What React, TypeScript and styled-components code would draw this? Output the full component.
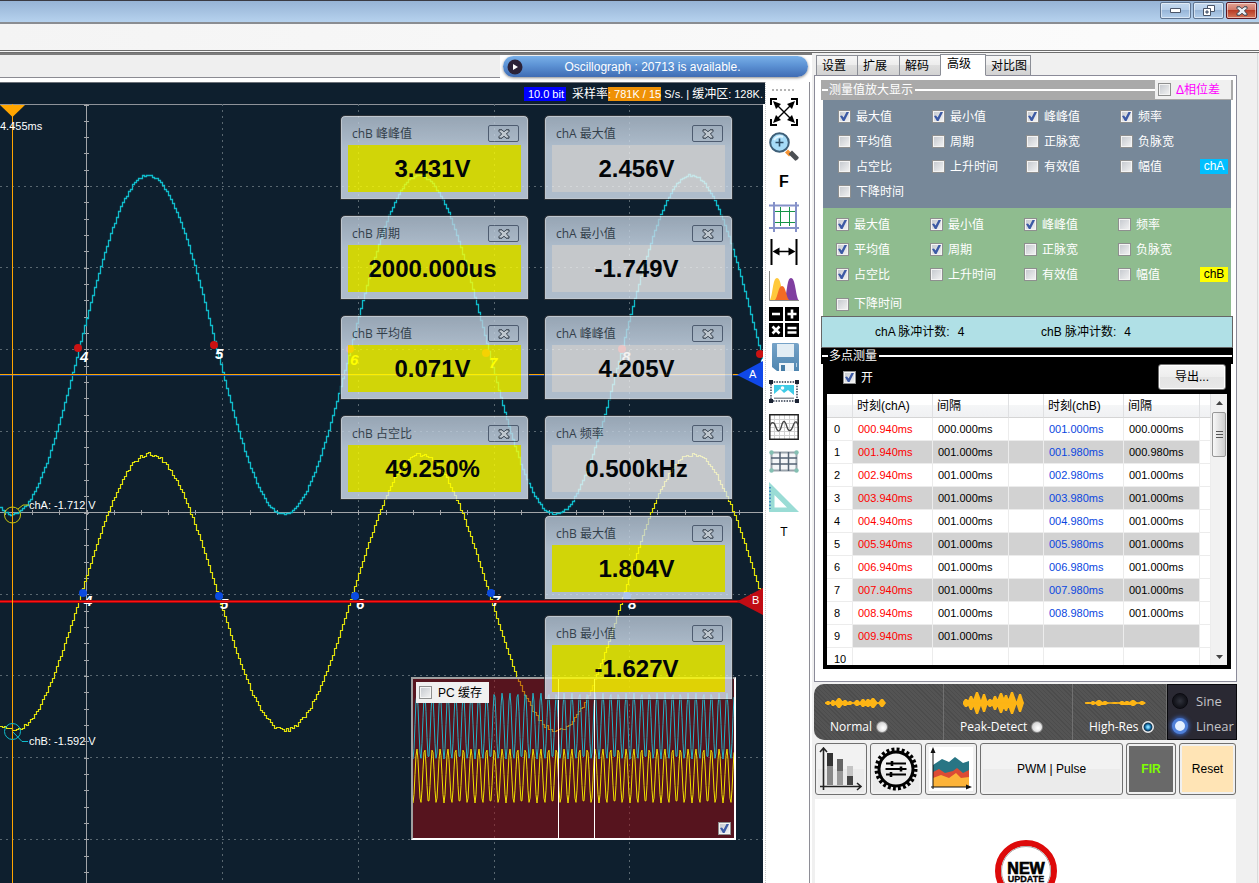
import React from "react";
import styled, { createGlobalStyle, css } from "styled-components";

const SANS = `"Liberation Sans", "Noto Sans CJK SC", sans-serif`;
const HUMANIST = `"Open Sans", "Noto Sans CJK SC", sans-serif`;

const GlobalStyle = createGlobalStyle`
  * { box-sizing: border-box; }
  body { margin: 0; background: #f0f0f0; font: 12px/16px ${SANS}; color: #000; }
  button { font: inherit; color: inherit; padding: 0; cursor: pointer; }
  svg { display: block; }
`;

/* ---------- window frame ---------- */

const Page = styled.div`
  display: flex;
  flex-direction: column;
  height: 100vh;
  overflow: hidden;
`;

const TitleBar = styled.header`
  display: flex;
  justify-content: flex-end;
  align-items: flex-start;
  gap: 2px;
  height: 24px;
  flex: none;
  padding: 1px 2px 0;
  border-top: 1px solid #3a3a42;
  border-bottom: 2px solid #8a8d92;
  background: linear-gradient(#96b3d5, #b6d2ee);
`;

const WindowButton = styled.button<{ $danger?: boolean }>`
  display: grid;
  place-items: center;
  width: 31px;
  height: 17px;
  border: 1px solid ${(p) => (p.$danger ? "#5a1420" : "#5f7490")};
  border-radius: 2px;
  box-shadow: inset 0 0 0 1px rgba(255, 255, 255, 0.5);
  background: ${(p) =>
    p.$danger
      ? "linear-gradient(#e3a495, #cf7666 48%, #b83c26 50%, #d47558)"
      : "linear-gradient(#c4d9ef, #b5cde8 48%, #98b6d8 50%, #b4cfec)"};
`;

const MenuBand = styled.div`
  flex: none;
  height: 29px;
  border-bottom: 3px double #6e6e6e;
  background: linear-gradient(90deg, #f4f4f4, #fcfcfc);
`;

const Main = styled.main`
  display: flex;
  flex: 1;
  min-height: 0;
`;

const Left = styled.section`
  display: flex;
  flex-direction: column;
  flex: 1;
  min-width: 0;
  background: #fff;
  border-top: 2px solid #7c7c7c;
`;

const StatusRow = styled.div`
  display: flex;
  flex: none;
  height: 27px;
`;

const StatusBlank = styled.div`
  flex: 1;
  height: 23px;
  background: #efefef;
  border-bottom: 1px solid #8b8b92;
`;

const StatusPill = styled.div`
  display: flex;
  align-items: center;
  width: 305px;
  height: 21px;
  margin: 1px 4px 0 3px;
  padding: 0 4px;
  border-radius: 11px;
  color: #fff;
  background: linear-gradient(#79b0e8, #5c92d4 45%, #3f6cb4);
  box-shadow: 0 1px 3px #8a8a8a;
`;

const StatusText = styled.span`
  flex: 1;
  padding: 1px 22px 0 0;
  text-align: center;
`;

const Work = styled.div`
  display: flex;
  flex: 1;
  min-height: 0;
`;

const Scope = styled.div`
  display: flex;
  flex-direction: column;
  flex: 1;
  min-width: 0;
`;

const Readout = styled.div`
  display: flex;
  align-items: center;
  justify-content: flex-end;
  flex: none;
  height: 22px;
  padding-right: 2px;
  border-top: 1px solid #6c7178;
  background: #0e1f2e;
  color: #fff;
  font-size: 11px;
  line-height: 14px;
  white-space: pre;
`;

const BitTag = styled.span`
  margin-right: 6px;
  padding: 0 2px 0 4px;
  background: #0000ff;
`;

const RateTag = styled.span`
  background: #ef9106;
`;

const RateUnit = styled.span`
  margin-right: 3px;
`;

const Cjk = styled.span`
  font-size: 12px;
`;

const Canvas = styled.div`
  position: relative;
  flex: 1;
  min-height: 0;
  margin-right: 2px;
  overflow: hidden;
  background: #0e1f2e;
`;

const Trace = styled.svg`
  width: 100%;
  height: 100%;
  font-family: ${SANS};
  font-size: 11px;
`;

/* ---------- floating value windows ---------- */

const Floating = styled.section<{ $x: number; $y: number }>`
  position: absolute;
  left: ${(p) => p.$x}px;
  top: ${(p) => p.$y}px;
  width: 189px;
  height: 85px;
  padding: 0 7px 7px 7px;
  border: 1px solid #33363a;
  border-radius: 5px 5px 0 0;
  box-shadow: inset 0 0 0 1px #e8eef5;
  background: linear-gradient(#b6c4d3, #d3e1f0 32px);
  opacity: 0.81;
`;

const FloatingHead = styled.div`
  display: flex;
  align-items: center;
  justify-content: space-between;
  height: 29px;
  padding: 6px 2px 0 4px;
  font-family: ${HUMANIST};
  color: #3c4852;
`;

const CloseButton = styled.button`
  display: grid;
  place-items: center;
  width: 31px;
  height: 17px;
  border: 1px solid #5d6b80;
  border-radius: 2px;
  background: transparent;
`;

const FloatingValue = styled.div<{ $yellow?: boolean }>`
  height: 47px;
  padding-right: 4px;
  font-size: 24px;
  font-weight: 700;
  line-height: 47px;
  text-align: center;
  background: ${(p) => (p.$yellow ? "#ffff00" : "#f0f0f0")};
`;

const Preview = styled.section`
  position: absolute;
  left: 411px;
  top: 573px;
  width: 325px;
  height: 163px;
  border: 2px solid #fff;
  border-top-color: #a0a0a0;
  border-left-color: #a0a0a0;
  background: rgba(158, 9, 14, 0.5);
`;

const PreviewCheck = styled.label`
  position: absolute;
  left: 3px;
  top: 3px;
  display: flex;
  align-items: center;
  gap: 6px;
  width: 73px;
  height: 21px;
  padding-left: 3px;
  background: #f0f0f0;
`;

const PreviewCorner = styled.div`
  position: absolute;
  right: 3px;
  bottom: 3px;
  display: flex;
`;

/* ---------- tool strip ---------- */

const Tools = styled.nav`
  display: flex;
  flex-direction: column;
  align-items: center;
  flex: none;
  width: 45px;
  margin-right: 2px;
  padding-right: 7px;
  border-left: 1px dotted #c8c8c8;
  border-right: 1px solid #8e8e96;
`;

const Grip = styled.div`
  flex: none;
  width: 24px;
  height: 2px;
  margin: 7px 0 3px;
  background: repeating-linear-gradient(90deg, #b4b4b4 0 2px, transparent 2px 4px);
`;

const ToolButton = styled.button<{ $size?: number; $bold?: boolean }>`
  display: grid;
  place-items: center;
  flex: none;
  width: 30px;
  height: 35px;
  border: 0;
  background: none;
  font-size: ${(p) => p.$size ?? 12}px;
  font-weight: ${(p) => (p.$bold ? 700 : 400)};
`;

/* ---------- right side ---------- */

const Side = styled.aside`
  display: flex;
  flex-direction: column;
  flex: none;
  width: 446px;
  margin-right: 1px;
  padding: 1px 20px 0 2px;
  border-right: 1px solid #dadada;
`;

const Tabs = styled.div`
  display: flex;
  align-items: flex-end;
  flex: none;
  height: 22px;
  padding-left: 3px;
  margin-bottom: -1px;
`;

const Tab = styled.button<{ $active?: boolean; $width: number }>`
  width: ${(p) => p.$width}px;
  height: 21px;
  padding-left: 5px;
  border: 1px solid #8b8e96;
  margin-left: -1px;
  text-align: left;
  background: linear-gradient(#f6f6f6, #ececec 50%, #dedede 50%, #d2d2d2);
  ${(p) =>
    p.$active &&
    css`
      z-index: 1;
      height: 22px;
      padding: 0 0 3px 6px;
      border-bottom-color: #fff;
      background: #fff;
    `}
`;

const TabPanel = styled.div`
  flex: none;
  padding: 4px 3px 12px 6px;
  border: 1px solid #8b8b99;
  background: #fff;
`;

const GroupHead = styled.div<{ $tone: string; $height: number }>`
  display: flex;
  align-items: center;
  height: ${(p) => p.$height}px;
  padding-left: 1px;
  color: #fff;
  background: ${(p) => p.$tone};
`;

const Rule = styled.span<{ $grow?: boolean }>`
  height: 2px;
  background: #fff;
  margin-right: 1px;
  ${(p) => (p.$grow ? "flex: 1; margin-left: 2px;" : "width: 6px;")}
`;

const PhaseCheck = styled.label`
  display: flex;
  align-self: flex-start;
  align-items: center;
  gap: 5px;
  width: 76px;
  height: 19px;
  padding-left: 3px;
  margin-right: 2px;
  margin-left: -1px;
  color: #ff00ff;
  background: #f0f0f0;
`;

const CheckLabel = styled.label`
  display: flex;
  align-items: center;
  gap: 5px;
  line-height: 16px;
  white-space: nowrap;
`;

const ChannelGrid = styled.div<{ $tone: string; $indent: number; $drop?: boolean }>`
  display: grid;
  grid-template-columns: 94px 94px 94px ${(p) => 95 - p.$indent}px 28px;
  grid-template-rows: 25px 25px 25px 1fr;
  align-items: center;
  height: 108px;
  margin: 0 2px;
  padding: 4px 0 4px ${(p) => p.$indent}px;
  color: #fff;
  background: ${(p) => p.$tone};
  ${CheckLabel}:nth-of-type(4n + 1) {
    grid-column: 1;
  }
  ${CheckLabel}:last-of-type {
    align-self: ${(p) => (p.$drop ? "end" : "center")};
  }
`;

const Check = styled.input.attrs({ type: "checkbox" })`
  appearance: none;
  flex: none;
  display: block;
  width: 13px;
  height: 13px;
  margin: 0;
  border: 1px solid #8e8f8f;
  background: linear-gradient(135deg, #c3c7cd, #f4f4f4);
  box-shadow: inset 0 0 0 1px #f4f4f4;
  &:checked::after {
    content: "";
    display: block;
    width: 9px;
    height: 9px;
    margin: 1px;
    background: #3c5aa5;
    clip-path: polygon(0 45%, 22% 38%, 40% 62%, 72% 0, 100% 0, 50% 100%, 32% 100%);
  }
`;

const ChannelBadge = styled.span<{ $tone: string; $ink: string }>`
  grid-column: 5;
  grid-row: 3;
  height: 15px;
  line-height: 15px;
  text-align: center;
  color: ${(p) => p.$ink};
  background: ${(p) => p.$tone};
`;

const PulseBar = styled.div`
  display: flex;
  align-items: center;
  height: 32px;
  padding-left: 53px;
  border: 1px solid #666;
  background: #b0e0e6;
`;

const PulseItem = styled.span`
  display: flex;
  gap: 8px;
  width: 166px;
`;

const MultiBody = styled.div`
  margin: 0 2px;
  padding: 0 4px 4px;
  background: #000;
`;

const MultiHead = styled.div`
  display: flex;
  justify-content: space-between;
  height: 30px;
  padding: 0 1px 3px 16px;
  color: #fff;
`;

const ExportButton = styled.button`
  width: 68px;
  height: 26px;
  border: 1px solid #707070;
  border-radius: 3px;
  color: #000;
  background: linear-gradient(#f6f6f6, #ededed 50%, #e4e4e4 50%, #e8e8e8);
  box-shadow: inset 0 0 0 1px #fff;
`;

const TableArea = styled.div`
  display: flex;
  height: 271px;
  overflow: hidden;
  background: #fff;
`;

const Table = styled.table`
  flex: 1;
  width: 384px;
  table-layout: fixed;
  border-collapse: separate;
  border-spacing: 0;
  align-self: flex-start;
  font-size: 11px;
`;

const HeadCell = styled.th`
  height: 24px;
  padding: 0 4px;
  border-right: 1px solid #dfe0e2;
  border-bottom: 1px solid #d5d5d5;
  background: linear-gradient(#fff 50%, #f5f6f7 50%, #f0f1f3);
  font-size: 12px;
  font-weight: 400;
  text-align: left;
  white-space: nowrap;
`;

const Cell = styled.td<{ $shade?: boolean; $ink?: string }>`
  height: 23px;
  padding: 0 5px;
  border-right: 1px solid #ececec;
  border-bottom: 1px solid #ececec;
  color: ${(p) => p.$ink ?? "#000"};
  background: ${(p) => (p.$shade ? "#d2d2d2" : "#fff")};
`;

const NumberCell = styled(Cell)`
  padding: 0 7px;
`;

const ScrollBar = styled.div`
  display: flex;
  flex-direction: column;
  align-items: center;
  width: 16px;
  background: #f1f1f1;
`;

const ScrollArrow = styled.button<{ $down?: boolean }>`
  display: grid;
  place-items: center;
  width: 16px;
  height: 17px;
  margin-top: ${(p) => (p.$down ? "auto" : "0")};
  border: 0;
  background: none;
`;

const ScrollThumb = styled.div`
  display: grid;
  place-items: center;
  width: 14px;
  height: 45px;
  margin-top: 1px;
  border: 1px solid #979797;
  border-radius: 2px;
  background: linear-gradient(90deg, #f8f8f8, #e3e3e3 50%, #cdcdcd);
`;

const ModeBar = styled.div`
  display: flex;
  flex: none;
  height: 56px;
  margin-top: 2px;
  color: #fff;
  font: 12px/18px ${HUMANIST};
`;

const ModeTile = styled.label<{ $width: number }>`
  display: flex;
  flex-direction: column;
  width: ${(p) => p.$width}px;
  padding: 5px 0 0 16px;
  border-right: 1px solid #707070;
  background: repeating-linear-gradient(45deg, #4c4c4c 0 1px, #545454 1px 3px);
  &:first-child {
    border-radius: 10px 0 0 10px;
  }
`;

const ModeWave = styled.svg<{ $shift: number }>`
  margin-left: ${(p) => p.$shift}px;
`;

const ModeName = styled.span`
  display: flex;
  align-items: center;
  gap: 4px;
  margin-top: 1px;
`;

const Radio = styled.input.attrs({ type: "radio" })`
  appearance: none;
  flex: none;
  width: 12px;
  height: 12px;
  margin: 0;
  border: 1px solid #888;
  border-radius: 50%;
  background: radial-gradient(circle at 60% 60%, #fff, #c4c4c4);
  &:checked {
    border-color: #e8e8e8;
    background: radial-gradient(circle, #7fd8ff 0 1px, #0a5f96 3px, #12314a 4px, #fff 5px);
  }
`;

const Interp = styled.div`
  display: flex;
  flex-direction: column;
  flex: 1;
  gap: 7px;
  padding: 7px 0 0 4px;
  border: 1px solid #08080c;
  background: #2a2933;
  color: #c4c4c8;
  font-size: 13px;
`;

const InterpRow = styled.label`
  display: flex;
  align-items: center;
  gap: 8px;
`;

const Lamp = styled.input.attrs({ type: "radio" })`
  appearance: none;
  flex: none;
  width: 16px;
  height: 16px;
  margin: 0;
  border: 1px solid #0a0a10;
  border-radius: 50%;
  background: radial-gradient(#30323c, #14151c 60%);
  &:checked {
    border: 3px solid #4f80d8;
    background: #e4f0ff;
    box-shadow: 0 0 4px 1px #3a68c8;
  }
`;

const Actions = styled.div`
  display: flex;
  flex: none;
  gap: 3px;
  margin: 3px 1px 4px;
`;

const ActionButton = styled.button<{ $width?: number; $tone?: string; $ink?: string }>`
  display: grid;
  place-items: center;
  width: ${(p) => p.$width ?? 52}px;
  height: 52px;
  border: 1px solid #707070;
  border-radius: 3px;
  box-shadow: inset 0 0 0 2px #f0f0f0;
  color: ${(p) => p.$ink ?? "#000"};
  font-weight: ${(p) => (p.$ink ? 700 : 400)};
  background: ${(p) => p.$tone ?? "linear-gradient(#f2f2f2 50%, #ebebeb 50%)"};
`;

const UpdateArea = styled.div`
  display: flex;
  justify-content: center;
  flex: 1;
  min-height: 0;
  margin: 0 1px;
  padding-top: 41px;
  overflow: hidden;
  background: #fff;
`;

/* ---------- trace data ---------- */

const noise = (n: number) => {
  const s = Math.sin(n * 127.1 + 11.7) * 43758.5453;
  return (s - Math.floor(s)) * 2 - 1;
};

function steppedSine(peakX: number, mid: number, amp: number, jitter: number, seed: number) {
  const period = 271.5;
  let d = "";
  for (let x = 0; x < 2400; x += 2) {
    const v = mid - amp * Math.cos((2 * Math.PI * (x - peakX)) / period);
    const extreme = Math.abs(v - mid) / amp;
    const y = Math.round(v + noise(x + seed) * jitter * extreme);
    d += x === 0 ? `M0 ${y}.5` : `H${x}.5V${y}.5`;
  }
  return d;
}

function denseSine(mid: number, amp: number) {
  let d = "";
  for (let i = 0; i < 322; i++) {
    const y = mid + amp * Math.cos((2 * Math.PI * i) / 7.75);
    d += `${i ? "L" : "M"}${i} ${y.toFixed(1)}`;
  }
  return d;
}

const traceA = steppedSine(147, 240.5, 169.5, 1, 3);
const traceB = steppedSine(148.5, 488, 138, 2, 57);
const miniA = denseSine(47, 33);
const miniB = denseSine(97, 27);

const gridX = [222, 358, 494, 629, 765, 901, 1037, 1173, 1309, 1445, 1581];
const gridY = [82, 163, 245, 327, 490, 571, 653, 735, 816, 898, 980];

const marksA = [
  { n: 4, x: 78, y: 244, dx: 2, dy: 14 },
  { n: 5, x: 214, y: 241, dx: 1, dy: 14 },
  { n: 6, x: 350, y: 245, dx: 0, dy: 16 },
  { n: 7, x: 486, y: 249, dx: 3, dy: 15 },
  { n: 8, x: 622, y: 245, dx: 0, dy: 13 },
  { n: 9, x: 760, y: 250, dx: 0, dy: 14 },
];
const marksB = [
  { n: 4, x: 83, y: 489 },
  { n: 5, x: 219, y: 492 },
  { n: 6, x: 355, y: 492 },
  { n: 7, x: 491, y: 489 },
  { n: 8, x: 627, y: 492 },
];

function TracePlot() {
  return (
    <Trace role="img" aria-label="chA chB">
      <path d="M0 .5H2400" stroke="#8e9299" />
      <g stroke="#596770" strokeDasharray="2 4">
        {gridX.map((x) => (
          <path key={x} d={`M${x}.5 0V1200`} />
        ))}
        {gridY.map((y) => (
          <path key={y} d={`M0 ${y}.5H2400`} />
        ))}
      </g>
      <g stroke="#a2a5a9">
        <path d="M86.5 0V1200M0 408.5H2400" />
        {Array.from({ length: 72 }, (_, i) => (
          <path key={i} d={`M84 ${Math.round(0.5 + i * 16.33)}.5h5`} />
        ))}
        {Array.from({ length: 86 }, (_, i) => (
          <path key={i} d={`M${Math.round(5 + i * 27.18)}.5 406v5`} />
        ))}
      </g>
      <g fill="none">
        <path d={traceA} stroke="#10bccb" strokeWidth="1.3" />
        <path d={traceB} stroke="#e2e20a" strokeWidth="1.2" />
      </g>
      <path d="M0 271.5H2400" stroke="#17439c" />
      <path d="M0 270.5H2400" stroke="#ffa500" />
      <g fontSize="15" fontWeight="700" fontStyle="italic" fill="#fff">
        {marksA.map((m) => (
          <React.Fragment key={m.n}>
            <circle cx={m.x} cy={m.y} r="4" fill="#cb1212" />
            <text x={m.x + m.dx} y={m.y + m.dy} fill={m.n === 6 || m.n === 7 ? "#ff0" : "#fff"}>
              {m.n}
            </text>
          </React.Fragment>
        ))}
        {marksB.map((m) => (
          <React.Fragment key={m.n}>
            <circle cx={m.x} cy={m.y} r="4" fill="#0a4be0" />
            <text x={m.x + 1} y={m.y + 13}>
              {m.n}
            </text>
          </React.Fragment>
        ))}
      </g>
      <path d="M0 497.5H745" stroke="#9c0a10" strokeWidth="3" />
      <path d="M0 497.5H745" stroke="#ff1010" />
      <path d="M12.5 0V1200" stroke="#ffa500" />
      <path d="M0 1H25L12.5 13Z" fill="#ffa500" />
      <path d="M737 271L763 257V284Z" fill="#1048e8" />
      <path d="M737 497.5L763 484V511Z" fill="#c00c14" />
      <g fill="none">
        <circle cx="12.5" cy="411" r="8" stroke="#c8c810" />
        <path d="M18 405L23 401H29" stroke="#c8c810" />
        <circle cx="12.5" cy="627.5" r="8" stroke="#10bccb" />
        <path d="M13 628L22 637.5H28" stroke="#10bccb" />
      </g>
      <g fill="#fff">
        <text x="0" y="26">4.455ms</text>
        <text x="29" y="405">chA: -1.712 V</text>
        <text x="29" y="641">chB: -1.592 V</text>
        <text x="749" y="274">A</text>
        <text x="752" y="500">B</text>
      </g>
    </Trace>
  );
}

/* ---------- icons ---------- */

const CloseGlyph = () => (
  <svg width="12" height="10" viewBox="0 0 12 10">
    <path d="M1 .8h3l2 2 2-2h3v1.6L8.400 5 11 7.600v1.600H8l-2-2-2 2H1V7.600L3.600 5 1 2.400z" fill="#e8eef4" stroke="#333c48" />
  </svg>
);

const ExpandIcon = () => (
  <svg width="28" height="28" viewBox="0 0 28 28">
    <g fill="none" stroke="#000" strokeWidth="2">
      <path d="M1 7V1h6M21 1h6v6M27 21v6h-6M7 27H1v-6" />
      <path d="M5 5l18 18M23 5L5 23" strokeWidth="1.400" />
    </g>
    <path d="M3 3l8 3-5 5zM25 3l-8 3 5 5zM3 25l8-3-5-5zM25 25l-8-3 5-5z" />
  </svg>
);

const MagnifierIcon = () => (
  <svg width="30" height="30" viewBox="0 0 30 30">
    <path d="M19 17.500l4 4-3 3-4-4z" fill="#f79433" />
    <path d="M19.500 22l3.500-3.500 6.500 6.500c1 1-2.500 4.500-3.500 3.500z" fill="#4c4f54" />
    <circle cx="10.500" cy="10.500" r="9.300" fill="#a6dcf8" stroke="#3f6079" strokeWidth="2" />
    <path d="M5 8a7 7 0 0 1 9-3" fill="none" stroke="#e0f5ff" strokeWidth="2" />
    <path d="M6.500 10.500h8M10.500 6.500v8" stroke="#2c4c66" strokeWidth="1.600" />
  </svg>
);

const CropGridIcon = () => (
  <svg width="30" height="30" viewBox="0 0 30 30" fill="none">
    <path d="M5 0v30M27 0v30M0 3.500h30M0 26h30" stroke="#8591c9" strokeWidth="2" />
    <path d="M11.500 5v19M20.500 5v19M6 9.500h20M6 20.500h20" stroke="#159447" />
  </svg>
);

const WidthIcon = () => (
  <svg width="28" height="26" viewBox="0 0 28 26">
    <path d="M1.500 0v26M26.500 0v26" stroke="#000" strokeWidth="2" />
    <path d="M5 12.500h18" stroke="#000" strokeWidth="1.500" />
    <path d="M2.500 12.500l7-4v8zM25.500 12.500l-7-4v8z" />
  </svg>
);

const HistogramIcon = () => (
  <svg width="30" height="31" viewBox="0 0 30 31">
    <path d="M15 29C18.500 24 17.500 7 22 7s4.500 17 7.500 22z" fill="#803fa0" />
    <path d="M1 29C4 24 3.500 7 8 7s4.500 17 8 22z" fill="#ffc93c" />
    <path d="M6 29c3-3 3-14 7-14s4 11 7 14z" fill="#f36b25" />
    <path d="M.5 0v29.500H30" fill="none" stroke="#8a8a8a" />
  </svg>
);

const CalcIcon = () => (
  <svg width="30" height="30" viewBox="0 0 30 30">
    <path d="M0 0h14v14H0zM16 0h14v14H16zM0 16h14v14H0zM16 16h14v14H16z" />
    <path d="M3 7h8M18.500 7h9M23 2.500v9M3.500 19.500l7 7M10.500 19.500l-7 7M18.500 21h9M18.500 25.500h9" stroke="#fff" strokeWidth="2.600" />
  </svg>
);

const SaveIcon = () => (
  <svg width="30" height="28" viewBox="0 0 30 28">
    <defs>
      <linearGradient id="disk" x1="0" y1="0" x2="0" y2="1">
        <stop offset="0" stopColor="#76a3c8" />
        <stop offset="1" stopColor="#4f86b0" />
      </linearGradient>
    </defs>
    <path d="M3 1q0-1 1-1h24q2 0 2 2v26H8l-5-4z" fill="url(#disk)" />
    <path d="M8 1h17v13H8z" fill="#e2edf4" />
    <path d="M10 20h15v8H10z" fill="#eef4f8" />
    <path d="M12 22h4v6h-4z" fill="#447ba5" />
    <path d="M27.500 20v4" stroke="#b6d0e2" />
  </svg>
);

const PictureIcon = () => (
  <svg width="30" height="23" viewBox="0 0 30 23">
    <path d="M2 2h26v19H2z" fill="none" stroke="#2a3548" strokeWidth="1.400" strokeDasharray="1.500 1.200" />
    <path d="M5 5h20v12H5z" fill="#3fcbe6" />
    <path d="M5 17v-3l6-5 4 4 4-3 6 5v2z" fill="#fff" />
    <circle cx="13.500" cy="8" r="1.800" fill="#fff" />
    <path d="M5 17.500h20v1.500H5z" fill="#8b9299" />
    <path d="M0 0h4v4H0zM26 0h4v4h-4zM0 19h4v4H0zM26 19h4v4h-4z" fill="#1b2333" />
  </svg>
);

const WaveIcon = () => (
  <svg width="30" height="26" viewBox="0 0 30 26" fill="none">
    <path d="M5.500 1v24M10.500 1v24M15.500 1v24M20.500 1v24M25.500 1v24M1 5.500h28M1 9.500h28M1 13.500h28M1 17.500h28M1 21.500h28" stroke="#d2d2d2" />
    <path d="M.8.800h28.400v24.400H.8z" stroke="#222" strokeWidth="1.500" />
    <path d="M1 12C2 8 5 7 6.500 12s4 8 6 0 4-4 5.500 1 4 5 6-1 4-5 5.500 0" stroke="#444" strokeWidth="1.300" />
  </svg>
);

const TableIcon = () => (
  <svg width="30" height="23" viewBox="0 0 30 23">
    <path d="M2.500 2.500h25v18h-25z" fill="#f4f6f8" stroke="#9aa4ac" strokeWidth="2" />
    <path d="M11 2v19M19.500 2v19M2 8h26M2 14h26" stroke="#536273" strokeWidth="1.500" />
    <g fill="#84bfb2">
      <circle cx="2.500" cy="2.500" r="2.200" />
      <circle cx="27.500" cy="2.500" r="2.200" />
      <circle cx="2.500" cy="20.500" r="2.200" />
      <circle cx="27.500" cy="20.500" r="2.200" />
    </g>
  </svg>
);

const RulerIcon = () => (
  <svg width="30" height="30" viewBox="0 0 30 30">
    <path d="M0 0l30 30H0zM5.500 13v12.500H18z" fill="#9adcd5" fillRule="evenodd" />
    <path d="M1 5v22" stroke="#4d8fc4" strokeWidth="2" strokeDasharray="1.500 2" />
  </svg>
);

const BarsIcon = () => (
  <svg width="44" height="44" viewBox="0 0 44 44">
    <path d="M8 6h6v13H8z" fill="#333" />
    <path d="M8 19h6v19H8z" fill="#888" />
    <path d="M18 12h6v12h-6z" fill="#666" />
    <path d="M18 24h6v14h-6z" fill="#999" />
    <path d="M28 19h6v10h-6z" fill="#c4c4c4" />
    <path d="M28 29h6v9h-6z" fill="#444" />
    <path d="M4.500 43V1M1 5l3.500-4L8 5M1 39.500h41M38 36l4 3.500-4 3.500" fill="none" stroke="#222" strokeWidth="1.600" />
  </svg>
);

const GearIcon = () => (
  <svg width="44" height="44" viewBox="0 0 44 44" fill="none" stroke="#000">
    <circle cx="22" cy="22" r="19.500" strokeWidth="4" strokeDasharray="2.900 2.205" />
    <circle cx="22" cy="22" r="17" strokeWidth="3" />
    <path d="M12 16.500h20M11.500 22h21M12 27.500h20" strokeWidth="1.800" />
    <path d="M18 14v5M27 19.500v5M17 25v5" strokeWidth="2.600" />
  </svg>
);

const AreaIcon = () => (
  <svg width="44" height="44" viewBox="0 0 44 44">
    <path d="M0 0h44v44H0z" fill="#fff" />
    <path d="M4 18l9-6 7 3 6-5 8 6 6-2v17H4z" fill="#287584" />
    <path d="M4 25l6-3 6 4 8-2 4-3 6 5 6-3v13H4z" fill="#dc4b35" />
    <path d="M4 31l8-3 8 3 7-5 5 5 8-1v10H4z" fill="#fcb339" />
    <path d="M4 42V4M2 40h38" stroke="#111" fill="none" />
    <path d="M4 0l2.500 6h-5zM43 40l-6 2.500v-5z" fill="#111" />
  </svg>
);

/* ---------- pieces ---------- */

function ValueWindow({ x, y, title, value }: { x: number; y: number; title: string; value: string }) {
  return (
    <Floating $x={x} $y={y}>
      <FloatingHead>
        <span>{title}</span>
        <CloseButton type="button" aria-label="关闭">
          <CloseGlyph />
        </CloseButton>
      </FloatingHead>
      <FloatingValue $yellow={title.startsWith("chB")}>{value}</FloatingValue>
    </Floating>
  );
}

const windows = [
  { x: 340, y: 11, title: "chB 峰峰值", value: "3.431V" },
  { x: 340, y: 111, title: "chB 周期", value: "2000.000us" },
  { x: 340, y: 211, title: "chB 平均值", value: "0.071V" },
  { x: 340, y: 311, title: "chB 占空比", value: "49.250%" },
  { x: 544, y: 11, title: "chA 最大值", value: "2.456V" },
  { x: 544, y: 111, title: "chA 最小值", value: "-1.749V" },
  { x: 544, y: 211, title: "chA 峰峰值", value: "4.205V" },
  { x: 544, y: 311, title: "chA 频率", value: "0.500kHz" },
  { x: 544, y: 411, title: "chB 最大值", value: "1.804V" },
  { x: 544, y: 511, title: "chB 最小值", value: "-1.627V" },
];

const measures = [
  "最大值", "最小值", "峰峰值", "频率",
  "平均值", "周期", "正脉宽", "负脉宽",
  "占空比", "上升时间", "有效值", "幅值",
  "下降时间",
];

function Channel({ name, tone, ink, badge, indent, on, drop }: {
  name: string; tone: string; ink: string; badge: string; indent: number; on: number[]; drop?: boolean;
}) {
  return (
    <ChannelGrid $tone={tone} $indent={indent} $drop={drop}>
      {measures.map((m, i) => (
        <CheckLabel key={m}>
          <Check defaultChecked={on.includes(i)} />
          {m}
        </CheckLabel>
      ))}
      <ChannelBadge $tone={badge} $ink={ink}>
        {name}
      </ChannelBadge>
    </ChannelGrid>
  );
}

const rows = Array.from({ length: 11 }, (_, i) => ({
  a: i < 10 ? `00${i}.940ms` : "",
  da: i === 0 ? "000.000ms" : i < 10 ? "001.000ms" : "",
  b: i === 0 ? "001.000ms" : i < 9 ? `00${i}.980ms` : "",
  db: i === 0 ? "000.000ms" : i === 1 ? "000.980ms" : i < 9 ? "001.000ms" : "",
}));

const tools: { name: string; icon: React.ReactNode; size?: number; bold?: boolean }[] = [
  { name: "全屏", icon: <ExpandIcon /> },
  { name: "放大", icon: <MagnifierIcon /> },
  { name: "F", icon: "F", size: 16, bold: true },
  { name: "网格", icon: <CropGridIcon /> },
  { name: "宽度", icon: <WidthIcon /> },
  { name: "直方图", icon: <HistogramIcon /> },
  { name: "运算", icon: <CalcIcon /> },
  { name: "保存", icon: <SaveIcon /> },
  { name: "图片", icon: <PictureIcon /> },
  { name: "波形", icon: <WaveIcon /> },
  { name: "表格", icon: <TableIcon /> },
  { name: "标尺", icon: <RulerIcon /> },
  { name: "T", icon: "T" },
];

/* each entry is one diamond: centre x, half width, half height */
const envelopes: Record<"normal" | "peak" | "high", number[][]> = {
  normal: [[3, 3, 2], [8, 3, 3], [14, 5, 5], [20, 4, 3], [25, 3, 2], [32, 4, 3], [38, 4, 4], [43, 4, 4], [48, 5, 5], [57, 4, 4]],
  peak: [[3, 4, 4], [8, 4, 7], [14, 5, 11], [21, 4, 9], [27, 4, 4], [32, 4, 7], [38, 5, 10], [43, 4, 8], [49, 5, 11], [57, 4, 9]],
  high: [[3, 3, 1], [8, 3, 2], [14, 5, 3], [20, 4, 2], [30, 4, 1], [37, 4, 2], [42, 4, 2], [48, 5, 3], [57, 4, 2]],
};

function Envelope({ kind, shift }: { kind: keyof typeof envelopes; shift: number }) {
  const d = envelopes[kind]
    .map(([x, w, h]) => `M${x - w} 14L${x - 1} ${14 - h}H${x + 1}L${x + w} 14L${x + 1} ${14 + h}H${x - 1}Z`)
    .join("");
  return (
    <ModeWave $shift={shift} width="61" height="28" viewBox="0 0 61 28">
      <path d={d} fill="#fdb515" />
      <path d="M0 14H60" stroke="#fdb515" strokeWidth="1.500" />
    </ModeWave>
  );
}

export default function App() {
  return (
    <Page>
      <GlobalStyle />
      <TitleBar>
        <WindowButton type="button" aria-label="最小化">
          <svg width="11" height="5" viewBox="0 0 11 5">
            <path d="M.5.5h10v4H.5z" fill="#fff" stroke="#4a5568" />
          </svg>
        </WindowButton>
        <WindowButton type="button" aria-label="还原">
          <svg width="12" height="11" viewBox="0 0 12 11" fill="#fff" stroke="#4a5568">
            <path d="M4.500.5h7v6h-7z" />
            <path d="M.5 3.500h7v7h-7z" />
            <path d="M3 6h2v2H3z" fill="#8fa9c8" />
          </svg>
        </WindowButton>
        <WindowButton type="button" aria-label="关闭" $danger>
          <CloseGlyph />
        </WindowButton>
      </TitleBar>
      <MenuBand />
      <Main>
        <Left>
          <StatusRow>
            <StatusBlank />
            <StatusPill>
              <svg width="16" height="16" viewBox="0 0 16 16">
                <circle cx="8" cy="8" r="7.500" fill="#2b2238" />
                <path d="M6 5l5 3-5 3z" fill="#fff" />
              </svg>
              <StatusText>Oscillograph : 20713 is available.</StatusText>
            </StatusPill>
          </StatusRow>
          <Work>
            <Scope>
              <Readout>
                <BitTag>10.0 bit</BitTag>
                <Cjk>采样率</Cjk>
                <RateTag>: 781K / 15</RateTag>
                <RateUnit>{" S/s. |"}</RateUnit>
                <Cjk>缓冲区</Cjk>
                {": 128K."}
              </Readout>
              <Canvas>
                <TracePlot />
                <Preview>
                  <svg width="321" height="159" viewBox="0 0 321 159" fill="none">
                    <path d={miniA} stroke="#22b4c8" />
                    <path d={miniB} stroke="#f0e000" />
                    <path d="M145.500 0V159M181.500 0V159" stroke="#fff" />
                  </svg>
                  <PreviewCheck>
                    <Check />
                    PC 缓存
                  </PreviewCheck>
                  <PreviewCorner>
                    <Check defaultChecked aria-label="显示" />
                  </PreviewCorner>
                </Preview>
                {windows.map((w) => (
                  <ValueWindow key={w.title} {...w} />
                ))}
              </Canvas>
            </Scope>
            <Tools>
              <Grip />
              {tools.map((t) => (
                <ToolButton key={t.name} type="button" aria-label={t.name} $size={t.size} $bold={t.bold}>
                  {t.icon}
                </ToolButton>
              ))}
            </Tools>
          </Work>
        </Left>

        <Side>
          <Tabs role="tablist">
            <Tab role="tab" $width={42}>设置</Tab>
            <Tab role="tab" $width={43}>扩展</Tab>
            <Tab role="tab" $width={42}>解码</Tab>
            <Tab role="tab" aria-selected $active $width={46}>高级</Tab>
            <Tab role="tab" $width={46}>对比图</Tab>
          </Tabs>
          <TabPanel role="tabpanel">
            <GroupHead $tone="#a9a9a9" $height={20}>
              <Rule />
              测量值放大显示
              <Rule $grow />
              <PhaseCheck>
                <Check />
                Δ相位差
              </PhaseCheck>
            </GroupHead>
            <Channel name="chA" tone="#778899" badge="#00bfff" ink="#fff" indent={15} on={[0, 1, 2, 3]} />
            <Channel name="chB" tone="#8fbc8f" badge="#ffff00" ink="#000" indent={13} on={[0, 1, 2, 4, 5, 8]} drop />
            <PulseBar>
              <PulseItem>
                <span>chA 脉冲计数:</span>
                <span>4</span>
              </PulseItem>
              <PulseItem>
                <span>chB 脉冲计数:</span>
                <span>4</span>
              </PulseItem>
            </PulseBar>
            <GroupHead $tone="#000" $height={16}>
              <Rule />
              多点测量
              <Rule $grow />
            </GroupHead>
            <MultiBody>
              <MultiHead>
                <CheckLabel>
                  <Check defaultChecked />
                  开
                </CheckLabel>
                <ExportButton type="button">导出...</ExportButton>
              </MultiHead>
              <TableArea>
                <Table>
                  <colgroup>
                    <col width="26" />
                    <col width="80" />
                    <col width="76" />
                    <col width="35" />
                    <col width="80" />
                    <col width="76" />
                    <col />
                  </colgroup>
                  <thead>
                    <tr>
                      <HeadCell />
                      <HeadCell>时刻(chA)</HeadCell>
                      <HeadCell>间隔</HeadCell>
                      <HeadCell />
                      <HeadCell>时刻(chB)</HeadCell>
                      <HeadCell>间隔</HeadCell>
                      <HeadCell />
                    </tr>
                  </thead>
                  <tbody>
                    {rows.map((r, i) => {
                      const shade = i % 2 === 1;
                      return (
                        <tr key={i}>
                          <NumberCell>{i}</NumberCell>
                          <Cell $shade={shade} $ink="#ff0000">{r.a}</Cell>
                          <Cell $shade={shade}>{r.da}</Cell>
                          <Cell $shade={shade} />
                          <Cell $shade={shade} $ink="#0a46e0">{r.b}</Cell>
                          <Cell $shade={shade}>{r.db}</Cell>
                          <Cell />
                        </tr>
                      );
                    })}
                  </tbody>
                </Table>
                <ScrollBar>
                  <ScrollArrow type="button" aria-label="向上">
                    <svg width="7" height="4" viewBox="0 0 7 4"><path d="M0 4l3.500-4L7 4z" fill="#444" /></svg>
                  </ScrollArrow>
                  <ScrollThumb>
                    <svg width="7" height="8" viewBox="0 0 7 8"><path d="M0 .5h7M0 3.500h7M0 6.500h7" stroke="#555" /></svg>
                  </ScrollThumb>
                  <ScrollArrow type="button" aria-label="向下" $down>
                    <svg width="7" height="4" viewBox="0 0 7 4"><path d="M0 0l3.500 4L7 0z" fill="#444" /></svg>
                  </ScrollArrow>
                </ScrollBar>
              </TableArea>
            </MultiBody>
          </TabPanel>

          <ModeBar>
            <ModeTile $width={130}>
              <Envelope kind="normal" shift={-5} />
              <ModeName>Normal <Radio name="mode" /></ModeName>
            </ModeTile>
            <ModeTile $width={129}>
              <Envelope kind="peak" shift={3} />
              <ModeName>Peak-Detect <Radio name="mode" /></ModeName>
            </ModeTile>
            <ModeTile $width={94}>
              <Envelope kind="high" shift={-4} />
              <ModeName>High-Res <Radio name="mode" defaultChecked /></ModeName>
            </ModeTile>
            <Interp>
              <InterpRow><Lamp name="interp" />Sine</InterpRow>
              <InterpRow><Lamp name="interp" defaultChecked />Linear</InterpRow>
            </Interp>
          </ModeBar>

          <Actions>
            <ActionButton type="button" aria-label="柱状图"><BarsIcon /></ActionButton>
            <ActionButton type="button" aria-label="设置"><GearIcon /></ActionButton>
            <ActionButton type="button" aria-label="面积图"><AreaIcon /></ActionButton>
            <ActionButton type="button" $width={143}>PWM | Pulse</ActionButton>
            <ActionButton type="button" $width={50} $tone="#696969" $ink="#7fff00">FIR</ActionButton>
            <ActionButton type="button" $width={57} $tone="#ffe4b5">Reset</ActionButton>
          </Actions>

          <UpdateArea>
            <svg width="62" height="62" viewBox="0 0 62 62" fontFamily="Liberation Sans, sans-serif" fontWeight="700" textAnchor="middle">
              <circle cx="31" cy="31" r="28" fill="#fff" stroke="#dd0a0a" strokeWidth="6" />
              <circle cx="31" cy="31" r="24.500" fill="none" stroke="#a8a8a8" />
              <text x="31" y="34" fontSize="16" stroke="#000" strokeWidth=".7">NEW</text>
              <text x="31" y="42" fontSize="9" stroke="#000" strokeWidth=".3">UPDATE</text>
            </svg>
          </UpdateArea>
        </Side>
      </Main>
    </Page>
  );
}
